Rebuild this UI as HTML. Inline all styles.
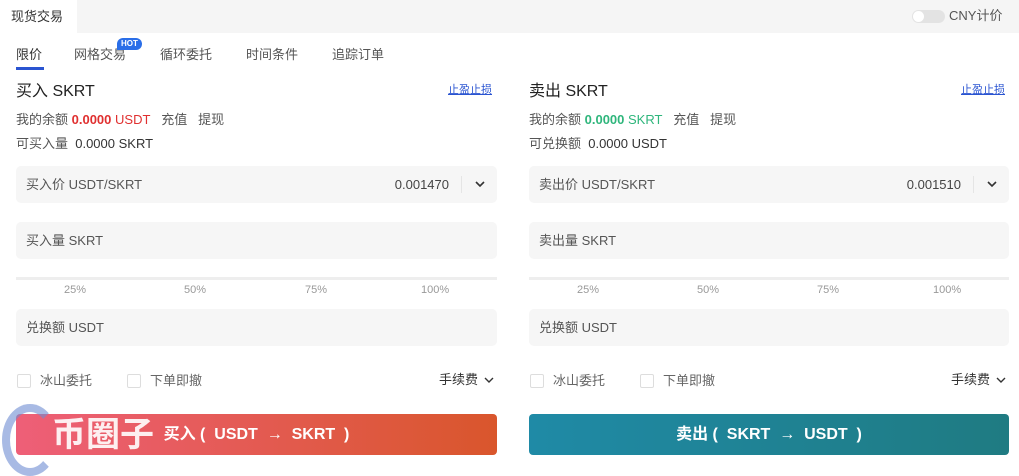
<!DOCTYPE html><html><head><meta charset="utf-8"><style>
*{margin:0;padding:0;box-sizing:border-box}
body{width:1019px;height:471px;background:#fff;font-family:"Liberation Sans","Noto Sans CJK SC",sans-serif;color:#333;position:relative;overflow:hidden}
.a{position:absolute;white-space:nowrap;line-height:1.2}
.box{position:absolute;background:#f6f6f6;border-radius:5px;height:37px;font-size:13px;color:#555;line-height:37px;padding-left:10px}
.cb{position:absolute;width:14px;height:14px;border:1px solid #ddd;border-radius:2px;background:#fff}
.pl{position:absolute;font-size:11px;color:#999}
.btn{position:absolute;height:41px;top:414px;border-radius:4px;color:#fff;font-weight:bold;font-size:16px;text-align:center;line-height:41px}
</style></head><body>
<div class="a" style="left:0;top:0;width:1019px;height:33px;background:#f5f5f5"></div>
<div class="a" style="left:0;top:0;width:77px;height:33px;background:#fff;font-size:13px;line-height:33px;padding-left:11px;color:#333">现货交易</div>
<div class="a" style="left:912px;top:10px;width:33px;height:13px;background:#e3e3e3;border-radius:7px"><div style="width:11px;height:11px;margin:1px;background:#fff;border-radius:50%"></div></div>
<div class="a" style="left:949px;top:8px;font-size:13px;color:#555">CNY计价</div>
<div class="a" style="top:47px;left:16px;font-size:13px;color:#333">限价</div>
<div class="a" style="top:67px;left:16px;width:28px;height:3px;background:#2a54d1"></div>
<div class="a" style="top:47px;left:74px;font-size:13px;color:#555">网格交易</div>
<div class="a" style="top:38px;left:117px;background:#2a6ee8;color:#fff;font-size:8px;font-weight:bold;padding:1px 4px;border-radius:7px 7px 7px 0">HOT</div>
<div class="a" style="top:47px;left:160px;font-size:13px;color:#555">循环委托</div>
<div class="a" style="top:47px;left:246px;font-size:13px;color:#555">时间条件</div>
<div class="a" style="top:47px;left:332px;font-size:13px;color:#555">追踪订单</div>

<!-- left -->
<div class="a" style="left:16px;top:82px;font-size:16px;color:#222">买入 SKRT</div>
<div class="a" style="left:448px;top:84px;font-size:11px;color:#2a54d1;text-decoration:underline">止盈止损</div>
<div class="a" style="left:16px;top:112px;font-size:13px;color:#555">我的余额 <b style="color:#e03030">0.0000</b> <span style="color:#e03030">USDT</span>&nbsp;&nbsp; 充值 &nbsp;&nbsp;提现</div>
<div class="a" style="left:16px;top:136px;font-size:13px;color:#555">可买入量 &nbsp;<span style="color:#333">0.0000 SKRT</span></div>
<div class="box" style="left:16px;top:166px;width:481px">买入价 USDT/SKRT<span class="a" style="right:48px;top:0;line-height:37px;color:#444">0.001470</span><span class="a" style="right:35px;top:10px;width:1px;height:17px;background:#e5e5e5"></span><svg class="a" style="right:12px;top:15px" width="10" height="7" viewBox="0 0 10 7"><path d="M1 1l4 4 4-4" fill="none" stroke="#333" stroke-width="1.6"/></svg></div>
<div class="box" style="left:16px;top:222px;width:481px">买入量 SKRT</div>
<div class="a" style="left:16px;top:277px;width:481px;height:3px;background:#eee"></div>
<div class="pl" style="left:64px;top:284px">25%</div><div class="pl" style="left:184px;top:284px">50%</div><div class="pl" style="left:305px;top:284px">75%</div><div class="pl" style="left:421px;top:284px">100%</div>
<div class="box" style="left:16px;top:309px;width:481px">兑换额 USDT</div>
<div class="cb" style="left:17px;top:374px"></div><div class="a" style="left:40px;top:373px;font-size:13px;color:#666">冰山委托</div>
<div class="cb" style="left:127px;top:374px"></div><div class="a" style="left:150px;top:373px;font-size:13px;color:#666">下单即撤</div>
<div class="a" style="left:439px;top:372px;font-size:13px;color:#333">手续费</div>
<svg class="a" style="left:484px;top:377px" width="10" height="7" viewBox="0 0 10 7"><path d="M1 1l4 4 4-4" fill="none" stroke="#333" stroke-width="1.4"/></svg>
<div class="btn" style="left:16px;width:481px;background:linear-gradient(90deg,#ee5f78,#d9562c)">买入 ( &nbsp;USDT &nbsp;→ &nbsp;SKRT &nbsp;)</div>
<div class="a" style="left:2px;top:404px;width:56px;height:72px;border:8px solid rgba(110,140,210,.6);border-right-color:transparent;border-radius:50%"></div>
<div class="a" style="left:52px;top:415px;font-size:34px;font-weight:bold;color:rgba(255,255,255,.9)">币圈子</div>

<!-- right -->
<div class="a" style="left:529px;top:82px;font-size:16px;color:#222">卖出 SKRT</div>
<div class="a" style="left:961px;top:84px;font-size:11px;color:#2a54d1;text-decoration:underline">止盈止损</div>
<div class="a" style="left:529px;top:112px;font-size:13px;color:#555">我的余额 <b style="color:#2fb67c">0.0000</b> <span style="color:#2fb67c">SKRT</span>&nbsp;&nbsp; 充值 &nbsp;&nbsp;提现</div>
<div class="a" style="left:529px;top:136px;font-size:13px;color:#555">可兑换额 &nbsp;<span style="color:#333">0.0000 USDT</span></div>
<div class="box" style="left:529px;top:166px;width:480px">卖出价 USDT/SKRT<span class="a" style="right:48px;top:0;line-height:37px;color:#444">0.001510</span><span class="a" style="right:35px;top:10px;width:1px;height:17px;background:#e5e5e5"></span><svg class="a" style="right:12px;top:15px" width="10" height="7" viewBox="0 0 10 7"><path d="M1 1l4 4 4-4" fill="none" stroke="#333" stroke-width="1.6"/></svg></div>
<div class="box" style="left:529px;top:222px;width:480px">卖出量 SKRT</div>
<div class="a" style="left:529px;top:277px;width:480px;height:3px;background:#eee"></div>
<div class="pl" style="left:577px;top:284px">25%</div><div class="pl" style="left:697px;top:284px">50%</div><div class="pl" style="left:817px;top:284px">75%</div><div class="pl" style="left:933px;top:284px">100%</div>
<div class="box" style="left:529px;top:309px;width:480px">兑换额 USDT</div>
<div class="cb" style="left:530px;top:374px"></div><div class="a" style="left:553px;top:373px;font-size:13px;color:#666">冰山委托</div>
<div class="cb" style="left:640px;top:374px"></div><div class="a" style="left:663px;top:373px;font-size:13px;color:#666">下单即撤</div>
<div class="a" style="left:951px;top:372px;font-size:13px;color:#333">手续费</div>
<svg class="a" style="left:996px;top:377px" width="10" height="7" viewBox="0 0 10 7"><path d="M1 1l4 4 4-4" fill="none" stroke="#333" stroke-width="1.4"/></svg>
<div class="btn" style="left:529px;width:480px;background:linear-gradient(90deg,#1f8aa6,#1f7b82)">卖出 ( &nbsp;SKRT &nbsp;→ &nbsp;USDT &nbsp;)</div>
</body></html>
